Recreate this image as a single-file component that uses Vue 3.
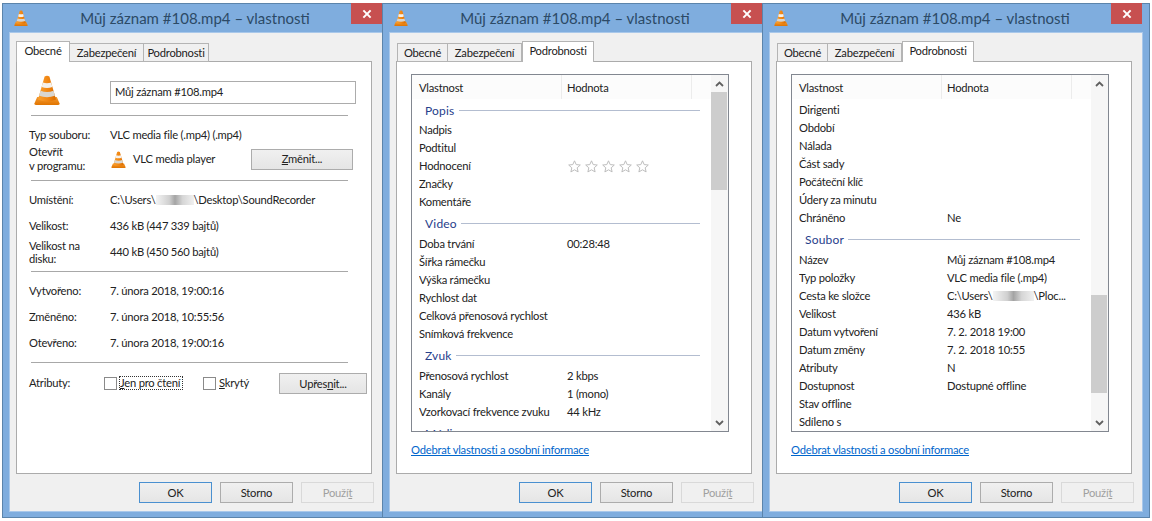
<script setup>
const detailSets = [
  {
    thumbTop: 0,
    items: [
      { group: 'Popis' },
      { k: 'Nadpis' }, { k: 'Podtitul' }, { k: 'Hodnocení', stars: true }, { k: 'Značky' }, { k: 'Komentáře' },
      { group: 'Video' },
      { k: 'Doba trvání', v: '00:28:48' }, { k: 'Šířka rámečku' }, { k: 'Výška rámečku' }, { k: 'Rychlost dat' },
      { k: 'Celková přenosová rychlost' }, { k: 'Snímková frekvence' },
      { group: 'Zvuk' },
      { k: 'Přenosová rychlost', v: '2 kbps' }, { k: 'Kanály', v: '1 (mono)' }, { k: 'Vzorkovací frekvence zvuku', v: '44 kHz' },
      { group: 'Médium' }
    ]
  },
  {
    thumbTop: 203,
    items: [
      { k: 'Dirigenti' }, { k: 'Období' }, { k: 'Nálada' }, { k: 'Část sady' }, { k: 'Počáteční klíč' },
      { k: 'Údery za minutu' }, { k: 'Chráněno', v: 'Ne' },
      { group: 'Soubor' },
      { k: 'Název', v: 'Můj záznam #108.mp4' }, { k: 'Typ položky', v: 'VLC media file (.mp4)' },
      { k: 'Cesta ke složce', path: true }, { k: 'Velikost', v: '436 kB' },
      { k: 'Datum vytvoření', v: '7. 2. 2018 19:00' }, { k: 'Datum změny', v: '7. 2. 2018 10:55' },
      { k: 'Atributy', v: 'N' }, { k: 'Dostupnost', v: 'Dostupné offline' }, { k: 'Stav offline' }, { k: 'Sdíleno s' }
    ]
  }
]
const windows = [
  { id: 0, active: 0 },
  { id: 1, active: 2, details: detailSets[0] },
  { id: 2, active: 2, details: detailSets[1] }
]
const tabs = ['Obecné', 'Zabezpečení', 'Podrobnosti']
const starPoints = '6.5,0.8 8.2,4.6 12.3,5 9.2,7.8 10.1,11.9 6.5,9.8 2.9,11.9 3.8,7.8 0.7,5 4.8,4.6'
</script>

<template>
  <svg class="defs" aria-hidden="true">
    <defs>
      <linearGradient id="coneFill" x1="0" x2="1" y1="0" y2="0">
        <stop offset="0" stop-color="#f9a030" />
        <stop offset="0.6" stop-color="#f08410" />
        <stop offset="1" stop-color="#d86c00" />
      </linearGradient>
      <linearGradient id="baseFill" x1="0" x2="0" y1="0" y2="1">
        <stop offset="0" stop-color="#f59a30" />
        <stop offset="1" stop-color="#e07400" />
      </linearGradient>
      <symbol id="vlc" viewBox="0 0 26 30">
        <path d="M3.2 22 L0.4 28.6 Q0.2 30 1.8 30 H24.2 Q25.8 30 25.6 28.6 L22.8 22Z" fill="url(#baseFill)" />
        <path d="M10.6 1.6 Q13 0 15.4 1.6 L22 24.5 Q13 28.5 4 24.5Z" fill="url(#coneFill)" />
        <path d="M8.9 7.4 Q13 9 17.1 7.4 L18.4 12 Q13 14 7.6 12Z" fill="#f4f1ec" />
        <path d="M6.5 15.8 Q13 18.2 19.5 15.8 L20.9 20.8 Q13 23.6 5.1 20.8Z" fill="#d9d6d0" />
      </symbol>
    </defs>
  </svg>

  <div class="desk">
    <section v-for="w in windows" :key="w.id" class="win">
      <header class="titlebar">
        <svg class="title-icon"><use href="#vlc" /></svg>
        <span class="title">Můj záznam #108.mp4 – vlastnosti</span>
        <span class="close">
          <svg width="10" height="10" viewBox="0 0 11 11"><path d="M1.5 1.5 L9.5 9.5 M9.5 1.5 L1.5 9.5" stroke="#fff" stroke-width="2.2" /></svg>
        </span>
      </header>

      <div class="client">
        <nav class="tabs">
          <span v-for="(t, i) in tabs" :key="t" class="tab" :class="{ on: i === w.active }">{{ t }}</span>
        </nav>

        <div class="panel">
          <!-- General page -->
          <template v-if="!w.details">
            <div class="g-head">
              <svg class="big-icon"><use href="#vlc" /></svg>
              <div class="name-box">Můj záznam #108.mp4</div>
            </div>
            <div class="sep"></div>

            <div class="sec sec-open">
              <span class="lbl">Typ souboru:</span>
              <span class="val">VLC media file (.mp4) (.mp4)</span>
              <span class="lbl two">Otevřít<br />v programu:</span>
              <div class="val app-row">
                <svg class="small-icon"><use href="#vlc" /></svg>
                <span class="app-name">VLC media player</span>
                <button class="btn change"><u>Z</u>měnit...</button>
              </div>
            </div>
            <div class="sep"></div>

            <div class="sec sec-size">
              <span class="lbl">Umístění:</span>
              <span class="val">C:\Users\<i class="blur wide"></i>\Desktop\SoundRecorder</span>
              <span class="lbl">Velikost:</span>
              <span class="val">436 kB (447 339 bajtů)</span>
              <span class="lbl two tight">Velikost na<br />disku:</span>
              <span class="val tight">440 kB (450 560 bajtů)</span>
            </div>
            <div class="sep"></div>

            <div class="sec sec-dates">
              <span class="lbl">Vytvořeno:</span>
              <span class="val">7. února 2018, 19:00:16</span>
              <span class="lbl">Změněno:</span>
              <span class="val">7. února 2018, 10:55:56</span>
              <span class="lbl">Otevřeno:</span>
              <span class="val">7. února 2018, 19:00:16</span>
            </div>
            <div class="sep"></div>

            <div class="attrs">
              <span class="attr-lbl">Atributy:</span>
              <span class="check"></span>
              <span class="focus"><u>J</u>en pro čtení</span>
              <span class="check second"></span>
              <span class="hidden-lbl"><u>S</u>krytý</span>
              <button class="btn more">Upřes<u>n</u>it...</button>
            </div>
          </template>

          <!-- Details page -->
          <template v-else>
            <div class="listbox">
              <div class="lb-main">
                <div class="lb-head">
                  <span class="hc hc-a">Vlastnost</span>
                  <span class="hc hc-b">Hodnota</span>
                  <span class="hc hc-c"></span>
                </div>
                <div class="lb-rows" :class="{ 'from-row': !w.details.items[0].group }">
                  <template v-for="it in w.details.items" :key="it.group || it.k">
                    <div v-if="it.group" class="group">
                      <span class="group-name">{{ it.group }}</span>
                      <span class="group-line"></span>
                    </div>
                    <div v-else class="row">
                      <span class="k">{{ it.k }}</span>
                      <span v-if="it.stars" class="stars">
                        <svg v-for="n in 5" :key="n" width="13" height="13" viewBox="0 0 13 13">
                          <polygon :points="starPoints" fill="#fff" stroke="#bdbdbd" stroke-width="1" />
                        </svg>
                      </span>
                      <span v-else-if="it.path" class="v">C:\Users\<i class="blur narrow"></i>\Ploc...</span>
                      <span v-else class="v">{{ it.v }}</span>
                    </div>
                  </template>
                </div>
              </div>
              <div class="sb">
                <span class="sb-btn">
                  <svg width="9" height="6" viewBox="0 0 9 6"><path d="M1 5 L4.5 1.5 L8 5" fill="none" stroke="#606060" stroke-width="1.8" /></svg>
                </span>
                <div class="sb-track">
                  <div class="sb-thumb" :style="{ marginTop: w.details.thumbTop + 'px' }"></div>
                </div>
                <span class="sb-btn">
                  <svg width="9" height="6" viewBox="0 0 9 6"><path d="M1 1 L4.5 4.5 L8 1" fill="none" stroke="#606060" stroke-width="1.8" /></svg>
                </span>
              </div>
            </div>
            <a class="remove">Odebrat vlastnosti a osobní informace</a>
          </template>
        </div>

        <footer class="foot">
          <button class="btn fbtn primary">OK</button>
          <button class="btn fbtn">Storno</button>
          <button class="btn fbtn off">Použí<u>t</u></button>
        </footer>
      </div>
    </section>
  </div>
</template>

<style>
html, body { background: #fff; margin: 0; }
</style>

<style scoped>
.defs { position: absolute; width: 0; height: 0; }
.desk {
  display: flex;
  padding: 3px 0 0 2px;
  font-family: Lato, Roboto, sans-serif;
  font-size: 11.2px;
  letter-spacing: -0.22px;
  color: #222;
}
.win {
  width: 380px;
  height: 515px;
  box-sizing: border-box;
  border: 1px solid #5b84ab;
  border-right: 0;
  padding-left: 7px;
  background: #7fadde;
  flex: none;
}
.win:last-child { width: 388px; border-right: 1px solid #5b84ab; padding-right: 7px; }
.titlebar { height: 29px; margin-left: -7px; display: flex; align-items: flex-start; }
.title-icon { width: 14px; height: 16px; margin: 6px 0 0 11px; flex: none; }
.title {
  flex: 1;
  text-align: center;
  font-size: 15px;
  letter-spacing: 0;
  line-height: 28px;
  color: #2c4a66;
  padding-left: 11px;
}
.close {
  width: 31px;
  height: 21px;
  margin-top: -1px;
  background: #c75050;
  display: flex;
  align-items: center;
  justify-content: center;
  flex: none;
}
.client {
  width: 372px;
  height: 478px;
  box-sizing: border-box;
  background: #f0f0f0;
  box-shadow: 0 0 0 1px #a9c8ea;
  padding: 8px 10px 0 6px;
}
.tabs { display: flex; height: 21px; position: relative; z-index: 1; margin-bottom: -1px; padding-left: 1px; }
.tab {
  margin-top: 2px;
  height: 19px;
  box-sizing: border-box;
  background: #f0f0f0;
  border: 1px solid #b4b4b4;
  border-left: 0;
  text-align: center;
  line-height: 17px;
}
.tab:nth-child(1) { width: 51px; border-left: 1px solid #b4b4b4; }
.tab:nth-child(2) { width: 74px; }
.tab:nth-child(3) { width: 65px; }
.tab.on {
  margin-top: 0;
  height: 21px;
  background: #fff;
  border: 1px solid #b4b4b4;
  border-bottom: 0;
  line-height: 18px;
}
.tab:nth-child(1).on { width: 54px; margin-left: -1px; }
.tab:nth-child(3).on { width: 72px; }
.panel {
  height: 413px;
  box-sizing: border-box;
  background: #fff;
  border: 1px solid #ababab;
  overflow: hidden;
}

/* General page */
.g-head { display: flex; padding: 13px 0 0 17px; height: 30px; }
.big-icon { width: 26px; height: 30px; flex: none; }
.name-box {
  margin: 6px 0 0 50px;
  width: 246px;
  height: 23px;
  box-sizing: border-box;
  border: 1px solid #acacac;
  padding-left: 4px;
  line-height: 19px;
}
.sep { width: 317px; height: 1px; background: #a8a8a8; margin-left: 14px; }
.g-head + .sep { margin-top: 10px; }
.sec {
  display: grid;
  grid-template-columns: 81px 1fr;
  padding-left: 12px;
  row-gap: 10px;
  line-height: 16px;
  padding-top: 11px;
}
.sec-open { row-gap: 2px; padding-bottom: 7px; }
.sec-size { padding-bottom: 6px; }
.sec-dates { padding-bottom: 11px; }
.two { line-height: 14px; }
.tight { margin-top: -5px; }
.lbl.tight { line-height: 13px; }
.val.tight { align-self: center; }
.app-row { display: flex; align-items: center; height: 28px; }
.small-icon { width: 15px; height: 17px; margin-left: 1px; flex: none; }
.app-name { margin: 0 0 0 7px; width: 118px; }
.btn {
  font: inherit;
  letter-spacing: inherit;
  color: #222;
  height: 21px;
  box-sizing: border-box;
  padding: 0;
  border: 1px solid #acacac;
  background: linear-gradient(#f0f0f0, #e5e5e5);
}
.change { width: 102px; }
.blur {
  display: inline-block;
  height: 10px;
  vertical-align: -1px;
  background: linear-gradient(90deg, #f4f4f4, #d0d0d0 35%, #a4a4a4 50%, #d6d6d6 70%, #f0f0f0);
}
.blur.wide { width: 38px; }
.blur.narrow { width: 41px; }
.attrs { display: flex; align-items: center; height: 21px; margin-top: 10px; padding-left: 12px; white-space: nowrap; }
.attr-lbl { width: 75px; flex: none; margin-bottom: 2px; }
.check { width: 13px; height: 13px; box-sizing: border-box; border: 1px solid #8a8a8a; flex: none; margin-bottom: 1px; }
.check.second { margin-left: 20px; }
.focus { width: 64px; box-sizing: border-box; flex: none; margin: 0 0 2px 2px; padding: 0 1px; outline: 1px dotted #333; outline-offset: -1px; line-height: 14px; }
.hidden-lbl { margin: 0 0 2px 3px; width: 60px; flex: none; }
.more { width: 88px; flex: none; }

/* Details page */
.listbox {
  margin: 12px 0 0 14px;
  width: 318px;
  height: 358px;
  box-sizing: border-box;
  border: 1px solid #828790;
  display: flex;
}
.lb-main { flex: 1; min-width: 0; overflow: hidden; }
.lb-head { display: flex; height: 24px; background: #fcfcfc; line-height: 26px; }
.hc { box-sizing: border-box; border-right: 1px solid #ececec; }
.hc-a { width: 150px; padding-left: 7px; }
.hc-b { width: 130px; padding-left: 5px; }
.hc-c { flex: 1; border-right: 0; }
.lb-rows { padding-top: 1px; }
.lb-rows.from-row { padding-top: 2px; }
.row { height: 18px; line-height: 18px; display: grid; grid-template-columns: 155px 1fr; padding-left: 7px; white-space: nowrap; }
.k { overflow: hidden; width: 148px; }
.v { margin-left: -7px; }
.stars { display: flex; gap: 4px; margin-left: -6px; align-items: center; }
.group { height: 20px; display: flex; align-items: center; padding: 0 11px 0 13px; margin: 2px 0 2px; }
.lb-rows > .group:first-child { margin: 0 0 1px; }
.group-name { color: #27408b; font-size: 12px; letter-spacing: 0.2px; }
.group-line { flex: 1; height: 1px; background: #b3bdd0; margin-left: 4px; }
.sb { width: 17px; flex: none; display: flex; flex-direction: column; background: #f6f6f6; }
.sb-btn { height: 17px; flex: none; display: flex; align-items: center; justify-content: center; }
.sb-track { flex: 1; padding-right: 1px; overflow: hidden; }
.sb-thumb { height: 98px; background: #cdcdcd; }
.remove {
  display: block;
  margin: 10px 0 0 14px;
  line-height: 16px;
  color: #0066cc;
  text-decoration: underline;
}

/* Footer */
.foot { display: flex; justify-content: flex-end; gap: 8px; margin: 8px -2px 0 0; }
.fbtn { width: 73px; }
.primary { border-color: #4a90d0; }
.off { color: #a0a0a0; border-color: #d9d9d9; background: #f0f0f0; }
</style>
